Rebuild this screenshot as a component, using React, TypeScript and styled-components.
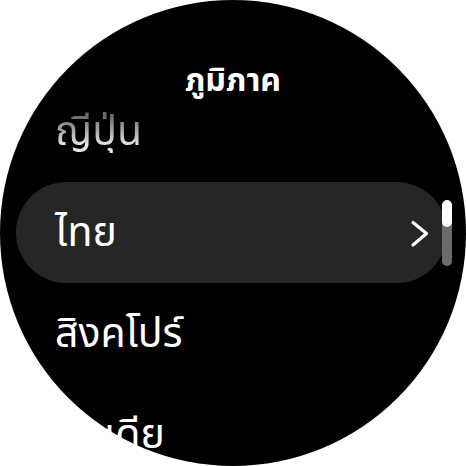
import React from "react";
import styled, { createGlobalStyle } from "styled-components";

const GlobalStyle = createGlobalStyle`
  html, body {
    margin: 0;
    padding: 0;
    background: #ffffff;
  }
  body {
    font-family: "Noto Sans Thai", "Noto Sans Thai UI", "Noto Sans", sans-serif;
  }
`;

type Region = {
  name: string;
  selected?: boolean;
  faded?: boolean;
};

const regions: Region[] = [
  { name: "ญี่ปุ่น", faded: true },
  { name: "ไทย", selected: true },
  { name: "สิงคโปร์" },
  { name: "อินเดีย" },
];

const App: React.FC = () => {
  return (
    <>
      <GlobalStyle />
      <Screen>
        <Title>ภูมิภาค</Title>
        <List>
          {regions.map((r) => (
            <Row key={r.name} $selected={r.selected}>
              <Label $faded={r.faded}>{r.name}</Label>
              {r.selected && (
                <Chevron viewBox="0 0 20 28" width="20" height="28">
                  <path
                    d="M3 2.5 L16.5 13.5 L3 25"
                    fill="none"
                    stroke="#ffffff"
                    strokeWidth="3.2"
                    strokeLinecap="round"
                    strokeLinejoin="round"
                  />
                </Chevron>
              )}
            </Row>
          ))}
        </List>
        <ScrollTrack>
          <ScrollThumb />
        </ScrollTrack>
      </Screen>
    </>
  );
};

export default App;

const Screen = styled.div`
  position: relative;
  width: 466px;
  height: 466px;
  border-radius: 50%;
  background: #000000;
  display: flex;
  flex-direction: column;
  align-items: stretch;
`;

const Title = styled.div`
  padding-top: 63px;
  margin-bottom: -18px;
  height: 36px;
  line-height: 36px;
  text-align: center;
  color: #ffffff;
  font-size: 32px;
  font-weight: 700;
  position: relative;
  z-index: 1;
`;

const List = styled.div`
  display: flex;
  flex-direction: column;
  padding: 0 19px 0 16px;
`;

const Row = styled.div<{ $selected?: boolean }>`
  height: 101px;
  border-radius: 51px;
  background: ${(p) => (p.$selected ? "#262626" : "transparent")};
  display: flex;
  align-items: center;
  justify-content: space-between;
  padding: 0 17px 0 39px;
`;

const Label = styled.span<{ $faded?: boolean }>`
  font-size: 41px;
  line-height: 1;
  color: #ffffff;
  white-space: nowrap;
  margin-top: 2px;
  ${(p) =>
    p.$faded &&
    `
    background: linear-gradient(180deg, #6a6a6a 10%, #e6e6e6 80%);
    -webkit-background-clip: text;
    background-clip: text;
    color: transparent;
  `}
`;

const Chevron = styled.svg`
  display: block;
  margin-top: 2px;
`;

const ScrollTrack = styled.div`
  position: absolute;
  left: 442px;
  top: 200px;
  width: 10px;
  height: 66px;
  border-radius: 5px;
  background: #6b6b6b;
  overflow: hidden;
`;

const ScrollThumb = styled.div`
  width: 100%;
  height: 27px;
  border-radius: 5px;
  background: #ffffff;
`;
